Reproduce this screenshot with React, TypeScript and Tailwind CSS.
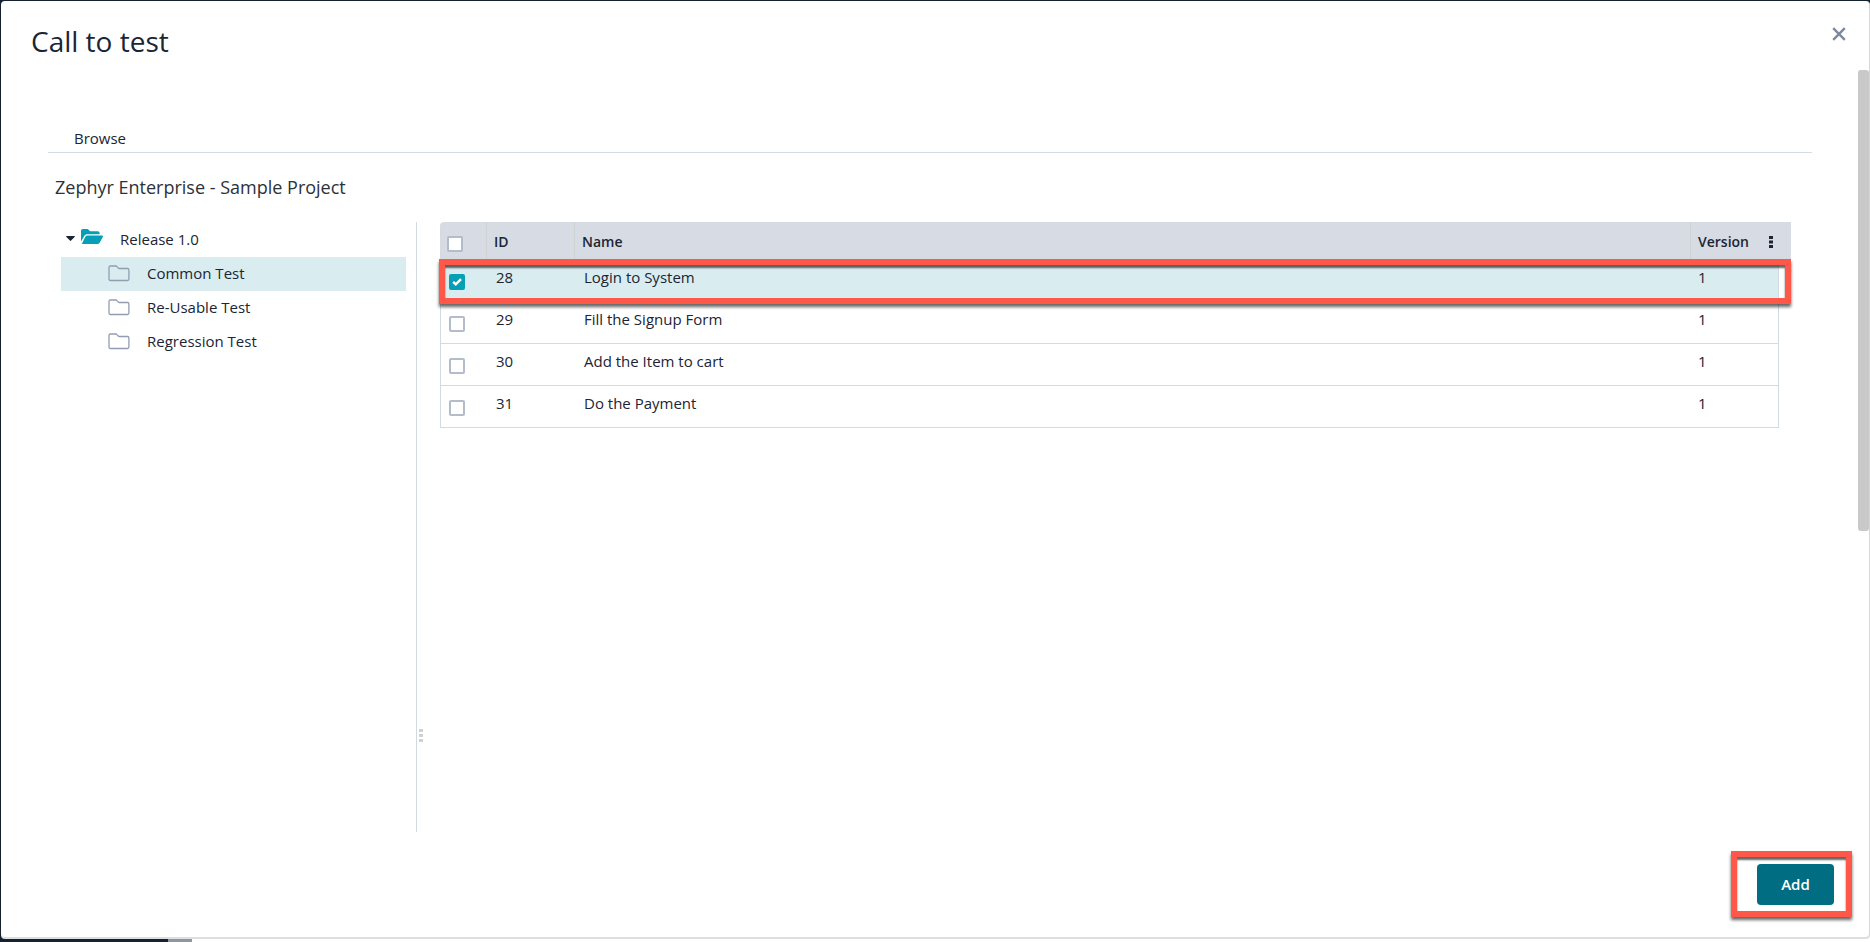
import { useState } from 'react';

interface TestCase {
  id: number;
  name: string;
  version: number;
}

const FOLDERS = ['Common Test', 'Re-Usable Test', 'Regression Test'];

const TEST_CASES: TestCase[] = [
  { id: 28, name: 'Login to System', version: 1 },
  { id: 29, name: 'Fill the Signup Form', version: 1 },
  { id: 30, name: 'Add the Item to cart', version: 1 },
  { id: 31, name: 'Do the Payment', version: 1 },
];

function FolderIcon() {
  return (
    <svg width="22" height="17" viewBox="0 0 22 17" fill="none" stroke="#929db2" strokeWidth="1.3">
      <path d="M1 2.6C1 1.6 1.5 1 2.4 1h5.4c.6 0 .9.2 1.2.6l1.1 1.3c.3.4.7.6 1.3.6h8.1c.9 0 1.4.5 1.4 1.4v9.2c0 .9-.5 1.4-1.4 1.4H2.4C1.5 15.500 1 15 1 14.100Z" />
    </svg>
  );
}

function FolderOpenIcon() {
  return (
    <svg width="22" height="16" viewBox="0 0 22 16" fill="#05a0b5">
      <path d="M0 12.500V1.900C0 .8.7 0 1.900 0h4.800l2.400 2.200h7.600c1.100 0 1.900.7 1.900 1.900v1.100H6.200c-1.200 0-2.200.6-2.800 1.600Z" />
      <path d="M1 14.400 4.500 7.600c.4-.8 1-1.200 1.900-1.200h14.500c.9 0 1.300.7.9 1.500l-3 5.700c-.5.9-1.100 1.300-2 1.300H1.500c-.6 0-.8-.2-.5-.5Z" />
    </svg>
  );
}

function Checkbox({
  label,
  checked,
  onChange,
}: {
  label: string;
  checked: boolean;
  onChange: () => void;
}) {
  return (
    <span className="relative block h-4 w-4">
      <input
        type="checkbox"
        aria-label={label}
        checked={checked}
        onChange={onChange}
        className="block h-4 w-4 appearance-none rounded-xs border-2 border-[#b3bccb] bg-white checked:border-[#05a0b5] checked:bg-[#05a0b5]"
      />
      {checked && (
        <svg
          className="pointer-events-none absolute inset-0"
          width="16"
          height="16"
          viewBox="0 0 16 16"
          fill="none"
          stroke="#fff"
          strokeWidth="2.4"
        >
          <path d="m4.200 7.800 2.600 2.600 5.200-5.200" />
        </svg>
      )}
    </span>
  );
}

export default function App() {
  const [folder, setFolder] = useState('Common Test');
  const [selected, setSelected] = useState<number[]>([28]);

  const toggle = (id: number) =>
    setSelected((prev) => (prev.includes(id) ? prev.filter((x) => x !== id) : [...prev, id]));

  const allSelected = selected.length === TEST_CASES.length;
  const toggleAll = () => setSelected(allSelected ? [] : TEST_CASES.map((t) => t.id));

  return (
    <div className="relative flex min-h-screen flex-col bg-[#15222d] pt-px pl-px pb-[5px] font-['Open_Sans','Noto_Sans',sans-serif] text-[15px] leading-5 text-[#1b2533]">
      {/* page behind the dialog */}
      <div className="absolute inset-x-0 bottom-0 flex h-3">
        <div className="w-[168px] bg-[#15222d]" />
        <div className="w-6 bg-[#8e979d]" />
        <div className="flex-1 bg-white" />
      </div>

      <div
        role="dialog"
        aria-labelledby="dialog-title"
        className="relative flex flex-1 flex-col rounded-[4px] border-r border-[#d6d6d6] bg-white shadow-[0_2px_0_#dedede]"
      >
        <header className="flex h-[69px] items-start justify-between pt-5 pr-[23px] pl-[30px]">
          <h1 id="dialog-title" className="text-[28px] leading-10">
            Call to test
          </h1>
          <button type="button" aria-label="Close" className="mt-px flex h-6 w-[14px] items-center justify-center">
            <svg width="14" height="14" viewBox="0 0 14 14" stroke="#7d899c" strokeWidth="2.4">
              <path d="m1.200 1.200 11.600 11.600M12.800 1.200 1.200 12.800" />
            </svg>
          </button>
        </header>

        <div className="flex flex-1">
          <main className="flex min-w-0 flex-1 flex-col pl-[47px]">
            <nav className="mt-[56px] mr-[46px] border-b border-[#d5dbe3] pb-[2px]">
              <a href="#browse" className="ml-[26px] inline-block leading-6">
                Browse
              </a>
            </nav>
            <h2 className="mt-[22px] ml-[7px] text-[18px] leading-6 text-[#2b3238]">
              Zephyr Enterprise - Sample Project
            </h2>

            <div className="mt-[23px] flex flex-1">
              <ul className="w-[369px] shrink-0 border-r border-[#d1d8e1] pr-[10px] pl-[13px]">
                <li>
                  <div className="flex h-[35px] items-center pb-[2px]">
                    <button type="button" aria-label="Collapse" className="ml-[5px] w-[9px]">
                      <svg width="9" height="5" viewBox="0 0 9 5" fill="#1b2533">
                        <path d="M.8 0h7.400c.6 0 .8.600.4 1L5.100 4.600c-.4.400-.8.400-1.200 0L.4 1C0 .6.2 0 .8 0Z" />
                      </svg>
                    </button>
                    <span className="-mt-1 ml-[6px]">
                      <FolderOpenIcon />
                    </span>
                    <span className="ml-[17px]">Release 1.0</span>
                  </div>
                  <ul>
                    {FOLDERS.map((name) => (
                      <li key={name}>
                        <button
                          type="button"
                          onClick={() => setFolder(name)}
                          className={`flex h-[34px] w-full items-center pb-[2px] pl-[47px] ${
                            name === folder ? 'bg-[#d9edf0]' : ''
                          }`}
                        >
                          <FolderIcon />
                          <span className="ml-[17px]">{name}</span>
                        </button>
                      </li>
                    ))}
                  </ul>
                </li>
              </ul>

              <div className="flex w-[23px] shrink-0 justify-center pt-[507px]">
                <svg className="mr-[15px]" width="4" height="14" viewBox="0 0 4 14" fill="#cfd1d4">
                  <path d="M0 0h4v3H0zM0 5h4v3H0zM0 10h4v3H0z" />
                </svg>
              </div>

              <div className="relative mr-[67px] min-w-0 flex-1 self-start">
                <table className="w-full table-fixed border-separate border-spacing-0 text-left">
                  <thead>
                    <tr className="h-[38px]">
                      <th className="w-[47px] rounded-tl-[4px] border-r border-[#cfd2d4] bg-[#d7dbe3] pt-[5px] pl-[7px]">
                        <Checkbox label="Select all" checked={allSelected} onChange={toggleAll} />
                      </th>
                      <th className="w-[88px] border-r border-[#cfd2d4] bg-[#d7dbe3] pt-[2px] pl-[7px] text-[14px] font-semibold">
                        ID
                      </th>
                      <th className="border-r border-[#cfd2d4] bg-[#d7dbe3] pt-[2px] pl-[7px] text-[14px] font-semibold">
                        Name
                      </th>
                      <th className="w-[88px] bg-[#d7dbe3] pt-[2px] pl-[7px] text-[14px] font-semibold">
                        <span className="flex items-center justify-between">
                          Version
                          <button type="button" aria-label="Columns" className="mr-[6px]">
                            <svg width="4" height="12" viewBox="0 0 4 12" fill="#1b2533">
                              <path d="M0 0h4v3H0zM0 4.500h4v3H0zM0 9h4v3H0z" />
                            </svg>
                          </button>
                        </span>
                      </th>
                      <th className="w-3 bg-[#d7dbe3]" aria-hidden="true" />
                    </tr>
                  </thead>
                  <tbody>
                    {TEST_CASES.map((t) => {
                      const cell = `border-b border-[#d3dae4] align-top ${
                        selected.includes(t.id) ? 'bg-[#d9edf0]' : ''
                      }`;
                      return (
                        <tr key={t.id} className="h-[42px]">
                          <td className={`${cell} border-l pt-[14px] pl-2`}>
                            <Checkbox
                              label={`Select ${t.name}`}
                              checked={selected.includes(t.id)}
                              onChange={() => toggle(t.id)}
                            />
                          </td>
                          <td className={`${cell} pt-[7px] pl-[9px]`}>{t.id}</td>
                          <td className={`${cell} pt-[7px] pl-[9px]`}>{t.name}</td>
                          <td className={`${cell} border-r pt-[7px] pl-[7px]`}>{t.version}</td>
                          <td />
                        </tr>
                      );
                    })}
                  </tbody>
                </table>
                <div className="pointer-events-none absolute top-[37px] right-0 -left-px h-[45px] border-6 border-[#ff5849] shadow-[0_3px_3px_rgba(0,0,0,0.6),inset_0_3px_2px_rgba(0,0,0,0.6)]" />
              </div>
            </div>
          </main>

          <div className="-mb-[86px] w-[11px] shrink-0">
            <div className="h-[461px] rounded-[3px] bg-[#c9c9c9]" />
          </div>
        </div>

        <footer className="mt-[19px] mr-[17px] mb-5 flex justify-end">
          <div className="border-6 border-[#ff5849] pt-[7px] pr-3 pb-[6px] pl-5 shadow-[0_3px_3px_rgba(0,0,0,0.6),inset_0_3px_2px_rgba(0,0,0,0.6)]">
            <button
              type="button"
              className="h-[41px] w-[77px] rounded-[4px] bg-[#006d82] pb-[2px] font-semibold text-white"
            >
              Add
            </button>
          </div>
        </footer>
      </div>
    </div>
  );
}
